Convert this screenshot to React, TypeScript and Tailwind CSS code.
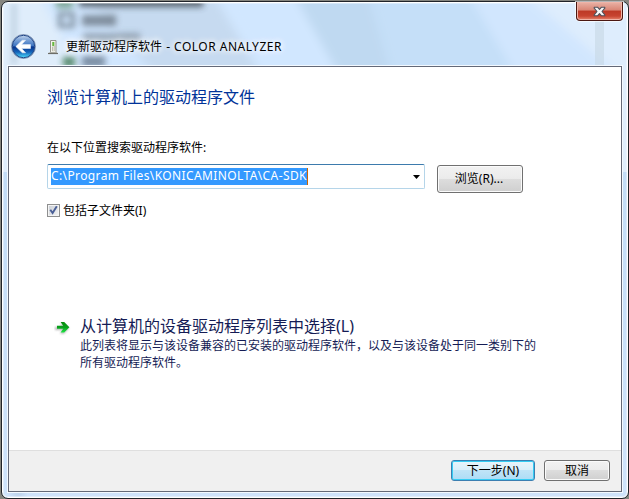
import React from "react";

const shadowText = "[text-shadow:0_0_6px_#fff,0_0_6px_#fff,0_0_10px_#fff]";

function BackArrow() {
  return (
    <svg width="26" height="26" viewBox="0 0 26 26">
      <defs>
        <linearGradient id="orb" x1="0" y1="0" x2="0" y2="1">
          <stop offset="0" stopColor="#c3d5ec" />
          <stop offset=".2" stopColor="#7fa5d8" />
          <stop offset=".46" stopColor="#3f76c2" />
          <stop offset=".52" stopColor="#08348c" />
          <stop offset=".75" stopColor="#1464ba" />
          <stop offset="1" stopColor="#4de0ff" />
        </linearGradient>
      </defs>
      <circle cx="12.5" cy="12.5" r="12" fill="#d9e6f5" stroke="#6b82a5" strokeWidth=".8" />
      <circle cx="12.5" cy="12.5" r="11.2" fill="url(#orb)" stroke="#234788" strokeWidth="1" />
      <path d="M4.8 12.5 11.3 6.2h3.3l-3.9 4.4h8.8v3.9h-8.8l3.9 4.3h-3.3z" fill="#fff" stroke="#e5edf7" strokeWidth=".6" strokeLinejoin="round" />
    </svg>
  );
}

function DeviceIcon() {
  return (
    <svg width="11" height="16" viewBox="0 0 11 16">
      <path d="M2.5 1.5h5.5v12h-5.5z" fill="#f4f4ed" stroke="#92928b" />
      <path d="M4 3h2.5v9.5H4z" fill="#dedfd3" />
      <path d="M4.3 3h2v4h-2z" fill="#67b83e" />
      <path d="M4 8h1v4H4zM6.3 7h.8v5h-.8z" fill="#bcbcb0" />
      <path d="M0 14.5h10" stroke="#6d6d67" strokeWidth="1.2" />
      <path d="M1.5 13.5H9" stroke="#aaaaa2" />
    </svg>
  );
}

function GreenArrow() {
  return (
    <svg width="18" height="16" viewBox="0 0 18 16">
      <defs>
        <linearGradient id="go" x1="0" y1="0" x2="0" y2="1">
          <stop offset="0" stopColor="#078b0b" />
          <stop offset=".5" stopColor="#08a01b" />
          <stop offset="1" stopColor="#1de844" />
        </linearGradient>
        <filter id="soft" x="-30%" y="-30%" width="160%" height="160%"><feGaussianBlur stdDeviation="1.1" /></filter>
      </defs>
      <path d="M1 7h8L6 3.5h3.8L15 8.2l-5.2 5.6H6L8.5 10H1z" fill="#999" opacity=".7" filter="url(#soft)" />
      <path d="M3 5.8h6.2L6.6 2h3.6L15.4 7.3 10.2 12.6H6.6L9.2 8.8H3z" fill="url(#go)" />
    </svg>
  );
}

export default function App() {
  return (
    <div className="h-[499px] w-[629px] overflow-hidden bg-[#85857f] pl-px pt-px font-['Noto_Sans','Noto_Sans_CJK_SC',sans-serif] text-xs text-black">
      <div className="relative flex h-[498px] w-[628px] flex-col rounded-[7px] border border-[#202329] bg-[#c5e0f8] shadow-[inset_0_0_0_1px_#fff]">
        <svg className="absolute left-px top-px" width="624" height="494" viewBox="0 0 624 494">
          <defs>
            <linearGradient id="side" x1="0" y1="0" x2="0" y2="1">
              <stop offset="0" stopColor="#bcd9f5" />
              <stop offset="1" stopColor="#cfe3fb" />
            </linearGradient>
            <filter id="blurText" x="-40%" y="-40%" width="180%" height="180%"><feGaussianBlur stdDeviation="3" /></filter>
            <filter id="blurStreak"><feGaussianBlur stdDeviation="5" /></filter>
            <clipPath id="inside"><rect width="624" height="494" rx="5" /></clipPath>
          </defs>
          <g clipPath="url(#inside)">
            <rect width="624" height="494" fill="url(#side)" />
            <rect width="624" height="66" fill="#d0e6fe" />
            <g filter="url(#blurStreak)">
              <path d="M-20-20H30L85 80H-20z" fill="#dfedfb" />
              <path d="M80-10H210L260 75H155z" fill="#c6daf0" />
              <path d="M212-10H290L340 75H262z" fill="#d1e7ff" />
              <path d="M290-10H365L390 75H338z" fill="#bfd9f1" />
              <path d="M365-10H465L515 75H390z" fill="#c5dff8" />
              <path d="M465-10H520L620 75H515z" fill="#d1e6fe" />
              <path d="M520-10H640V75H620z" fill="#deedfd" />
            </g>
            <path d="M0 62h5v107H0zM619 62h5v107h-5z" fill="#dfedfc" />
            <rect x="592" width="9" height="64" fill="#c7d8e7" opacity=".65" />
            <g filter="url(#blurText)" opacity=".75">
              <path d="M76-8H200V4H76z" fill="#39434b" />
              <path d="M53-6H70V5H53z" fill="#629276" />
              <path d="M57 11H70V23H57z" fill="none" stroke="#667380" strokeWidth="4" />
              <path d="M79 12H113V23H79z" fill="#66727f" />
              <path d="M80 30H137V40H80z" fill="#8191a2" />
              <path d="M60 54H72V64H60z" fill="#27683d" />
              <path d="M79 53H102V64H79z" fill="#5f7185" />
              <path d="M9 0H13V62H9z" fill="#a9bdcf" />
            </g>
            <path d="M10 489h10v4H10z" fill="#7e98b5" opacity=".45" filter="url(#blurText)" />
            <rect width="624" height="494" rx="5" fill="none" stroke="#fff" strokeOpacity=".7" />
          </g>
        </svg>

        <header className={`relative flex h-[64px] shrink-0 items-start pl-[9px] ${shadowText}`}>
          <div className="mt-[32px]"><BackArrow /></div>
          <div className="ml-[11px] mt-[37px]"><DeviceIcon /></div>
          <h1 className="ml-[7px] mt-[35px] whitespace-nowrap leading-[19px]">更新驱动程序软件 <span className="ml-px tracking-[0.49px]">- COLOR ANALYZER</span></h1>
          <button aria-label="Close" className="absolute right-[5px] top-0 flex h-[19px] w-[47px] items-center justify-center rounded-b-[4px] border border-t-0 border-[#4a1712] bg-[linear-gradient(#eab3a7_0%,#d98575_45%,#bd3926_50%,#c74430_78%,#e7866f_100%)] pr-px shadow-[inset_0_0_0_1px_#efb4a8,0_0_0_1px_#ffffffaa]">
            <svg width="13" height="11" viewBox="0 0 13 11">
              <path d="M1.2 1.2h3.3l2 2.2 2-2.2h3.3v1L9 5.5l2.8 3.3v1H8.5l-2-2.2-2 2.2H1.2v-1L4 5.5 1.2 2.2z" fill="#f8f8f8" stroke="#4f535d" strokeWidth="1.1" strokeLinejoin="round" />
            </svg>
          </button>
        </header>

        <div className="relative ml-[6px] flex h-[426px] w-[614px] flex-col border border-[#646978] bg-white shadow-[0_0_0_1px_#f3f9ff]">
          <main className="flex h-[383px] flex-col items-start pl-[38px]">
            <h2 className="mt-[19px] whitespace-nowrap text-[16px] leading-[23px] text-[#003399]">浏览计算机上的驱动程序文件</h2>
            <p className="mt-[30px] whitespace-nowrap leading-[18px]">在以下位置搜索驱动程序软件:</p>
            <div className="mt-[7px] flex items-start gap-[12px]">
              <div className="flex h-[25px] w-[378px] items-center justify-between rounded-[2px] border border-[#b5d5e9] border-t-[#3d7bad] pl-[3px] pr-[4px]">
                <span className="h-[17px] w-[257px] whitespace-nowrap border-r border-[#cc6600] bg-[#3399ff] leading-[16px] tracking-[0.39px] text-white">C:\Program Files\KONICAMINOLTA\CA-SDK</span>
                <svg width="7" height="4" viewBox="0 0 7 4"><path d="M0 0h7L3.5 4z" /></svg>
              </div>
              <button className="mt-px h-[28px] w-[86px] rounded-[3px] border border-[#707070] bg-[linear-gradient(#f2f2f2_0%,#ebebeb_48%,#dddddd_50%,#cfcfcf_100%)] pr-[2px] leading-[26px] shadow-[inset_0_0_0_1px_#fbfbfb]">浏览(R)...</button>
            </div>
            <label className="mt-[8px] flex h-[18px] items-center gap-[3px]">
              <span className="flex h-[13px] w-[13px] items-center justify-center border border-[#8e8f8f] bg-[linear-gradient(135deg,#c9ced5,#f5f5f5)] shadow-[inset_0_0_0_1px_#f4f4f4]">
                <svg width="9" height="10" viewBox="0 0 9 10"><path d="M1.3 4.7 3.6 8 7.8 1.2" fill="none" stroke="#4a5f97" strokeWidth="1.9" /></svg>
              </span>
              <span className="whitespace-nowrap pt-[2px] leading-[18px]">包括子文件夹(I)</span>
            </label>
            <section className="ml-[7px] mt-[96px] flex items-start text-[#151c55]">
              <div className="mt-[5px]"><GreenArrow /></div>
              <div className="ml-[8px]">
                <h3 className="whitespace-nowrap text-[16px] leading-[22px]">从计算机的设备驱动程序列表中选择(L)</h3>
                <p className="whitespace-nowrap leading-[17px]">此列表将显示与该设备兼容的已安装的驱动程序软件，以及与该设备处于同一类别下的<br />所有驱动程序软件。</p>
              </div>
            </section>
          </main>
          <footer className="flex flex-1 items-start justify-end gap-[9px] border-t border-[#dfdfdf] bg-[#f0f0f0] pr-[11px] pt-[9px]">
            <button className="h-[21px] w-[84px] rounded-[3px] border border-[#3c7fb1] bg-[linear-gradient(#e9f5fb_0%,#d9effa_48%,#c0e4f7_50%,#acdcf6_100%)] leading-[19px] shadow-[inset_0_0_0_1px_#35ccf3]">下一步(N)</button>
            <button className="h-[21px] w-[66px] rounded-[3px] border border-[#707070] bg-[linear-gradient(#f2f2f2_0%,#ebebeb_48%,#dddddd_50%,#cfcfcf_100%)] leading-[19px] shadow-[inset_0_0_0_1px_#fbfbfb]">取消</button>
          </footer>
        </div>
      </div>
    </div>
  );
}
